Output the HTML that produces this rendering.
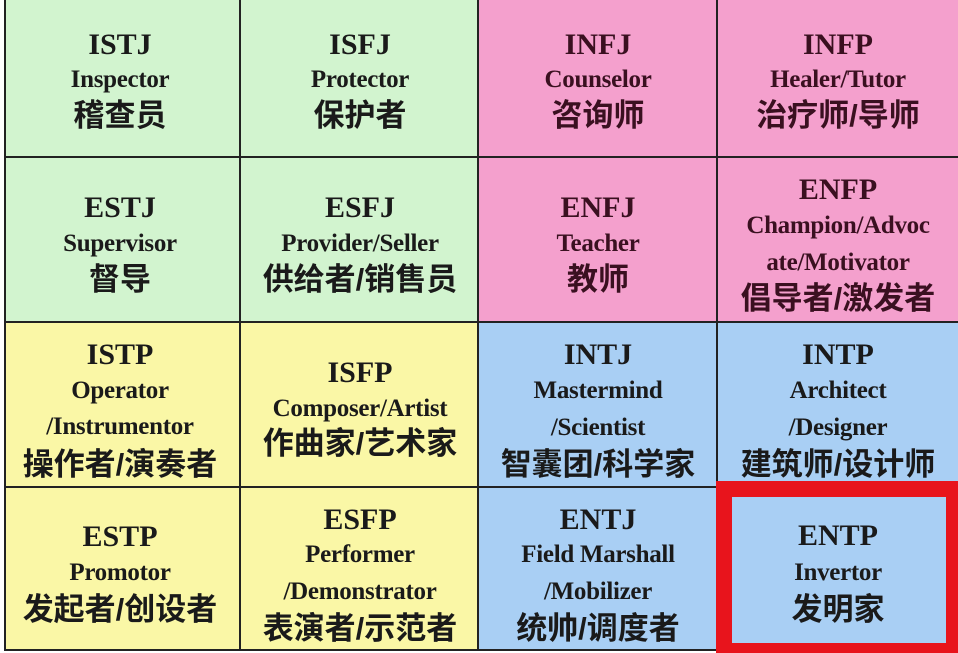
<!DOCTYPE html>
<html><head><meta charset="utf-8"><style>
html,body{margin:0;padding:0;background:#fff;}
body{width:958px;height:653px;position:relative;overflow:hidden;}
.c{position:absolute;}
.g{background:#d2f4cf}.p{background:#f4a0cd}.y{background:#faf7a6}.b{background:#a9cff4}
.l{position:absolute;width:240px;text-align:center;line-height:36px;height:36px;white-space:nowrap;color:#1a1a1a;}
.t{font:bold 30px "Liberation Serif",serif;margin-top:4px;}
.e{font:bold 25px "Liberation Serif",serif;letter-spacing:-0.3px;margin-top:6px;}
.z{font:bold 31px "Liberation Sans","Noto Sans CJK SC",sans-serif;margin-top:-4px;}
.p2 .l{color:#3a1020}
.v{position:absolute;background:#222;}
</style></head><body>
<div class="c g" style="left:5px;top:0;width:476px;height:322px"></div>
<div class="c p" style="left:478px;top:0;width:480px;height:322px"></div>
<div class="c y" style="left:5px;top:322px;width:476px;height:328px"></div>
<div class="c b" style="left:478px;top:322px;width:480px;height:328px"></div>
<div class="v" style="left:4px;top:0;width:2px;height:651px"></div>
<div class="v" style="left:239px;top:0;width:2px;height:651px"></div>
<div class="v" style="left:477px;top:0;width:2px;height:651px"></div>
<div class="v" style="left:716px;top:0;width:2px;height:651px"></div>
<div class="v" style="left:4px;top:156px;width:954px;height:2px"></div>
<div class="v" style="left:4px;top:321px;width:954px;height:2px"></div>
<div class="v" style="left:4px;top:486px;width:954px;height:2px"></div>
<div class="v" style="left:4px;top:649px;width:954px;height:2px"></div>
<div class="c" style="left:716px;top:481px;width:242px;height:172px;background:#e8141c"></div>
<div class="c b" style="left:732px;top:497px;width:214px;height:146px"></div>

<div class="l t" style="left:0;top:24px">ISTJ</div>
<div class="l e" style="left:0;top:60px">Inspector</div>
<div class="l z" style="left:0;top:94px">稽查员</div>
<div class="l t" style="left:0;top:187px">ESTJ</div>
<div class="l e" style="left:0;top:224px">Supervisor</div>
<div class="l z" style="left:0;top:258px">督导</div>
<div class="l t" style="left:0;top:334px">ISTP</div>
<div class="l e" style="left:0;top:371px">Operator</div>
<div class="l e" style="left:0;top:407px">/Instrumentor</div>
<div class="l z" style="left:0;top:443px">操作者/演奏者</div>
<div class="l t" style="left:0;top:516px">ESTP</div>
<div class="l e" style="left:0;top:553px">Promotor</div>
<div class="l z" style="left:0;top:588px">发起者/创设者</div>

<div class="l t" style="left:240px;top:24px">ISFJ</div>
<div class="l e" style="left:240px;top:60px">Protector</div>
<div class="l z" style="left:240px;top:94px">保护者</div>
<div class="l t" style="left:240px;top:187px">ESFJ</div>
<div class="l e" style="left:240px;top:224px">Provider/Seller</div>
<div class="l z" style="left:240px;top:258px">供给者/销售员</div>
<div class="l t" style="left:240px;top:352px">ISFP</div>
<div class="l e" style="left:240px;top:389px">Composer/Artist</div>
<div class="l z" style="left:240px;top:422px">作曲家/艺术家</div>
<div class="l t" style="left:240px;top:499px">ESFP</div>
<div class="l e" style="left:240px;top:535px">Performer</div>
<div class="l e" style="left:240px;top:572px">/Demonstrator</div>
<div class="l z" style="left:240px;top:607px">表演者/示范者</div>

<div class="p2">
<div class="l t" style="left:478px;top:24px">INFJ</div>
<div class="l e" style="left:478px;top:60px">Counselor</div>
<div class="l z" style="left:478px;top:94px">咨询师</div>
<div class="l t" style="left:478px;top:187px">ENFJ</div>
<div class="l e" style="left:478px;top:224px">Teacher</div>
<div class="l z" style="left:478px;top:258px">教师</div>
<div class="l t" style="left:718px;top:24px">INFP</div>
<div class="l e" style="left:718px;top:60px">Healer/Tutor</div>
<div class="l z" style="left:718px;top:94px">治疗师/导师</div>
<div class="l t" style="left:718px;top:169px">ENFP</div>
<div class="l e" style="left:718px;top:206px">Champion/Advoc</div>
<div class="l e" style="left:718px;top:243px">ate/Motivator</div>
<div class="l z" style="left:718px;top:277px">倡导者/激发者</div>
</div>
<div class="l t" style="left:478px;top:334px">INTJ</div>
<div class="l e" style="left:478px;top:371px">Mastermind</div>
<div class="l e" style="left:478px;top:408px">/Scientist</div>
<div class="l z" style="left:478px;top:443px">智囊团/科学家</div>
<div class="l t" style="left:478px;top:499px">ENTJ</div>
<div class="l e" style="left:478px;top:535px">Field Marshall</div>
<div class="l e" style="left:478px;top:572px">/Mobilizer</div>
<div class="l z" style="left:478px;top:607px">统帅/调度者</div>

<div class="l t" style="left:718px;top:334px">INTP</div>
<div class="l e" style="left:718px;top:371px">Architect</div>
<div class="l e" style="left:718px;top:408px">/Designer</div>
<div class="l z" style="left:718px;top:443px">建筑师/设计师</div>
<div class="l t" style="left:718px;top:515px">ENTP</div>
<div class="l e" style="left:718px;top:553px">Invertor</div>
<div class="l z" style="left:718px;top:588px">发明家</div>
</body></html>
